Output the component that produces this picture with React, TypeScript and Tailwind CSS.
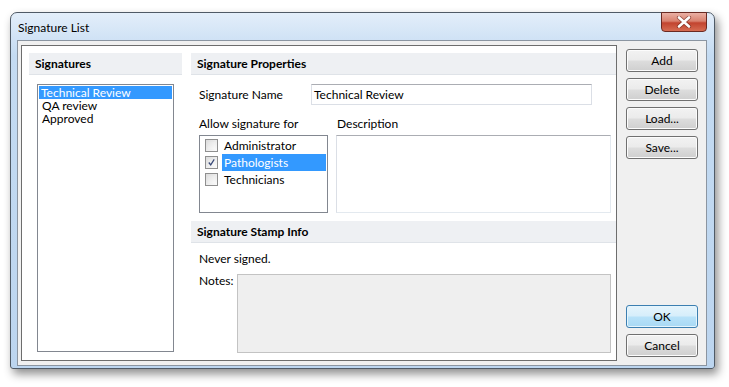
import React from "react";

const font = { fontFamily: 'Lato, "Noto Sans", sans-serif' };

function Btn({ label, primary }: { label: string; primary?: boolean }) {
  return (
    <div
      className={
        "h-[23px] w-[72px] rounded-[3px] border flex items-center justify-center text-[12px] text-black " +
        (primary
          ? "border-[#3c7fb1] bg-[linear-gradient(#e5f4fc_0%,#d6eefb_48%,#b8e2f9_52%,#a9d9f4_100%)] shadow-[inset_0_0_0_1px_#e5f5fd]"
          : "border-[#707070] bg-[linear-gradient(#f2f2f2_0%,#ebebeb_48%,#dddddd_52%,#cfcfcf_100%)] shadow-[inset_0_0_0_1px_#fcfcfc]")
      }
    >
      {label}
    </div>
  );
}

function Header({ text }: { text: string }) {
  return (
    <div className="h-[22px] bg-[#eef0f3] border-b border-[#dfe3e8] flex items-center pl-[6px] font-bold text-[12px] text-black">
      {text}
    </div>
  );
}

function Check({ checked }: { checked?: boolean }) {
  return (
    <div className="w-[13px] h-[13px] border border-[#8f8f8f] bg-[linear-gradient(135deg,#dcdcdc,#fbfbfb)] p-[2px] flex items-center justify-center">
      <div className="w-full h-full bg-[linear-gradient(135deg,#e4e4e4,#f9f9f9)] flex items-center justify-center">
        {checked && (
          <svg width="9" height="9" viewBox="0 0 9 9">
            <path d="M1 4.5 L3.5 7.5 L8 0.5" stroke="#3a4a78" strokeWidth="1.6" fill="none" />
          </svg>
        )}
      </div>
    </div>
  );
}

export default function App() {
  return (
    <div className="w-[729px] h-[387px] bg-white overflow-hidden" style={font}>
      <div className="ml-[10px] mt-[12px] w-[705px] h-[357px] rounded-t-[7px] rounded-b-[3px] border border-[#4f5a66] bg-[linear-gradient(#e3eefa,#c4dbf2_12%,#bcd5ef)] shadow-[3px_5px_10px_rgba(0,0,0,0.45)] flex flex-col relative">
        <div className="h-[27px] flex items-center pl-[7px] pt-[3px] text-[12px] text-black">Signature List</div>
        <div className="absolute right-[7px] top-[-1px] w-[46px] h-[20px] rounded-b-[4px] border border-[#6b2a22] bg-[linear-gradient(#eab0a4,#d9826f_45%,#c2442f_55%,#d66c52)] flex items-center justify-center">
          <svg width="16" height="12" viewBox="0 0 16 12">
            <path d="M3 1.5 L13 10.5 M13 1.5 L3 10.5" stroke="#5a1a10" strokeWidth="4.2" strokeLinecap="round" opacity="0.55" />
            <path d="M3 1.5 L13 10.5 M13 1.5 L3 10.5" stroke="#ffffff" strokeWidth="2.6" strokeLinecap="round" />
          </svg>
        </div>
        <div className="ml-[6px] w-[690px] h-[326px] border border-[#8b95a1] bg-[#f0f0f0] flex pl-[3px] pt-[4px] pb-[4px] pr-[8px]">
          <div className="w-[596px] h-[316px] border border-[#6d6d6d] bg-white flex px-[7px] pt-[7px] pr-0">
            <div className="w-[153px] flex flex-col">
              <Header text="Signatures" />
              <div className="mt-[9px] mx-[8px] h-[268px] border border-[#828790] p-[1px] text-[12px] leading-[13px]">
                <div className="bg-[#3399ff] text-white pl-[2px] h-[13px]">Technical Review</div>
                <div className="pl-[3px] h-[13px] text-black">QA review</div>
                <div className="pl-[3px] h-[13px] text-black">Approved</div>
              </div>
            </div>
            <div className="ml-[9px] flex-1 flex flex-col text-[12px] text-black">
              <Header text="Signature Properties" />
              <div className="mt-[9px] flex items-center h-[21px] pl-[8px]">
                <div className="w-[112px]">Signature Name</div>
                <div className="w-[281px] h-[21px] border border-[#dbdfe6] border-t-[#abadb3] flex items-center pl-[2px]">Technical Review</div>
              </div>
              <div className="mt-[11px] flex pl-[8px] h-[16px] items-center">
                <div className="w-[138px]">Allow signature for</div>
                <div>Description</div>
              </div>
              <div className="mt-[3px] flex pl-[8px]">
                <div className="w-[129px] h-[78px] border border-[#828790] pt-[1px] pl-[5px] pr-[1px]">
                  {[
                    ["Administrator", false],
                    ["Pathologists", true],
                    ["Technicians", false],
                  ].map(([t, c]) => (
                    <div key={t as string} className="h-[17px] flex items-center">
                      <Check checked={c as boolean} />
                      <div className={"ml-[4px] flex-1 h-[17px] flex items-center pl-[2px] " + (c ? "bg-[#3399ff] text-white" : "")}>{t as string}</div>
                    </div>
                  ))}
                </div>
                <div className="ml-[8px] w-[275px] h-[78px] border border-[#e3e9ef] border-t-[#abadb3] border-l-[#dbdfe6]" />
              </div>
              <div className="mt-[8px]">
                <Header text="Signature Stamp Info" />
              </div>
              <div className="mt-[8px] pl-[8px] h-[16px] flex items-center">Never signed.</div>
              <div className="mt-[7px] flex pl-[8px]">
                <div className="w-[38px] leading-[14px]">Notes:</div>
                <div className="w-[374px] h-[79px] border border-[#c3c3c3] bg-[#efefef]" />
              </div>
            </div>
          </div>
          <div className="ml-[9px] pt-[4px] pb-[4px] flex flex-col gap-[6px] h-full">
            <Btn label="Add" />
            <Btn label="Delete" />
            <Btn label="Load..." />
            <Btn label="Save..." />
            <div className="flex-1" />
            <Btn label="OK" primary />
            <Btn label="Cancel" />
          </div>
        </div>
      </div>
    </div>
  );
}
